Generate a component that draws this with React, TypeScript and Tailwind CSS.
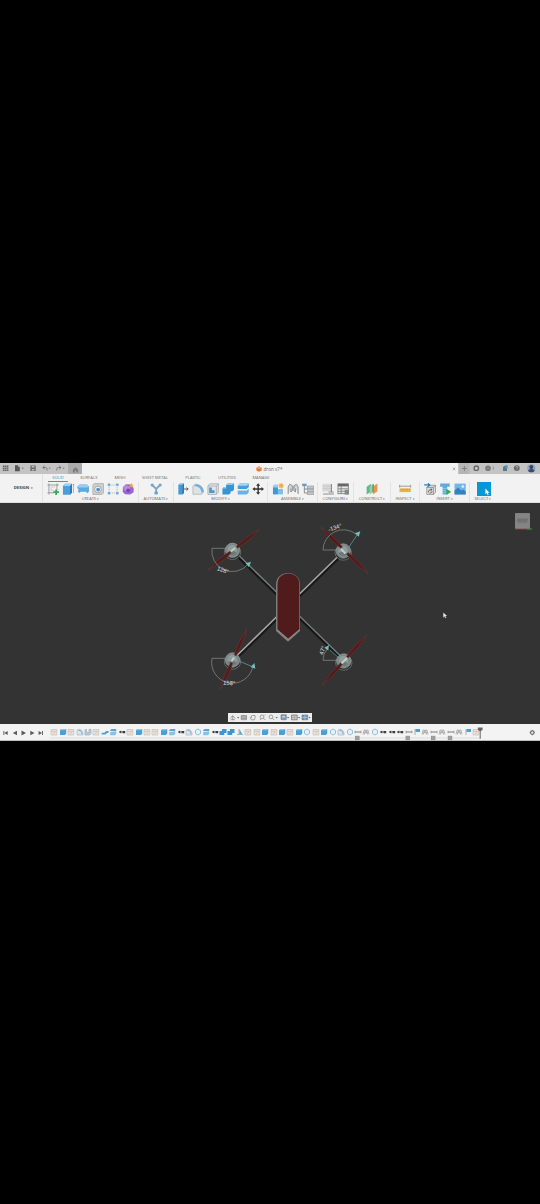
import React from "react";

type IconName =
  | "sketch" | "extrude" | "sheet" | "hole" | "pattern" | "form" | "automate"
  | "press" | "fillet" | "shell" | "combine" | "split" | "move" | "component"
  | "joint" | "structure" | "configure" | "table" | "plane" | "measure"
  | "derive" | "bolt" | "image" | "select";

const glyphs: Record<IconName, React.ReactNode> = {
  sketch: (
    <>
      <path d="M1.8 .5v11M9.8 .5v6.5M.3 2h11.4M.3 9.8h6.5" stroke="#8a8a8a" strokeWidth=".8" fill="none" />
      <path d="M4 4h4M4 7.4h3M4 4v3.4" stroke="#b5b5b5" strokeWidth=".6" fill="none" />
      <path d="M9 6.4v5.6M6.2 9.2h5.6" stroke="#2fae54" strokeWidth="1.8" />
    </>
  ),
  extrude: (
    <>
      <path d="M.8 3l2-2.2h7V9.5L8 11.7H.8z" fill="#4a9fdb" />
      <path d="M.8 3l2-2.2h7L8 3z" fill="#9fd0f0" />
      <path d="M8 3L9.8.8v8.7L8 11.7z" fill="#2a78b5" />
      <path d="M11.3 1v9M10.7 2.2l.6-1.2.6 1.2" stroke="#888" strokeWidth=".6" fill="none" />
    </>
  ),
  sheet: (
    <>
      <path d="M.2 3.5L2.5 1.5h7.3l2 2v5.3l-1.6 1.5-1.5-1.5H3.6L2 10 .8 8.6 1.5 6 .2 5.5z" fill="#5aa9e0" />
      <path d="M.2 3.5l2.3-2h7.3l2 2-1.8 1H1.5z" fill="#9acdee" />
    </>
  ),
  hole: (
    <>
      <path d="M.7 2L2 .6h9.3V10L10 11.4H.7z" fill="#d2d0cd" stroke="#a5a3a0" strokeWidth=".7" />
      <circle cx="5.8" cy="6.4" r="3.4" fill="#eeeeee" stroke="#8795a2" strokeWidth=".7" />
      <circle cx="6" cy="6.6" r="1.9" fill="#4d96cc" />
    </>
  ),
  pattern: (
    <>
      <path d="M2 2h8M2 2v8h8M10 4v6" stroke="#9a9a9a" strokeWidth=".6" strokeDasharray="1.4 .7" fill="none" />
      <path d="M.6.6H3V3H.6zM9 .6h2.4V3H9zM.6 9H3v2.4H.6zM9 9h2.4v2.4H9z" fill="#66ace0" />
    </>
  ),
  form: (
    <>
      <path d="M.8 4l3-2.8 5 .3L11.5 5v4.2L8 11.6 3 11.2.6 9z" fill="#9a63d2" />
      <path d="M1 4l3-2 4 2-.5 3.5-5 .5z" fill="#b78de0" />
      <circle cx="6" cy="7.2" r="1.8" fill="#7640b2" />
      <path d="M9.3 0l.7 1.6 1.7.5-1.5 1 .1 1.8-1.4-1.1-1.6.5.5-1.7-1-1.4H8.6z" fill="#f4a92d" />
    </>
  ),
  automate: (
    <>
      <path d="M2 2l4 4 4-4M6 6v5" stroke="#7fa5c0" strokeWidth="1.9" fill="none" />
      <circle cx="2" cy="2" r="1.6" fill="#6da9cf" />
      <circle cx="10" cy="2" r="1.6" fill="#6da9cf" />
      <path d="M4.3 11.4h3.4V8.7H4.3z" fill="#5fa6d4" />
    </>
  ),
  press: (
    <>
      <path d="M1.2 1.8L2.8.5h4v9.6l-1.5 1.5H1.2z" fill="#459ad4" />
      <path d="M1.2 1.8L2.8.5h4L5.3 1.8z" fill="#a1d0ee" />
      <path d="M5.3 1.8L6.8.5v9.6l-1.5 1.5z" fill="#2a78b5" />
      <path d="M7 6h4M9.5 4.5L11 6 9.5 7.5" stroke="#555" strokeWidth="1" fill="none" />
    </>
  ),
  fillet: (
    <>
      <path d="M.8 11.3V3l2-1.8c5 0 8.6 3 8.6 7.8l-2 2.3z" fill="#dfe1e2" stroke="#9aa2a8" strokeWidth=".6" />
      <path d="M2 3l1.8-1.8c4.5.4 7.2 3 7.6 7.2L9.5 10.2C9 5.7 7 3.5 2 3z" fill="#68b0e0" />
    </>
  ),
  shell: (
    <>
      <path d="M.8 3l2-2.2h8.4v8.4l-2 2.2H.8z" fill="#e4e5e6" stroke="#9aa0a6" strokeWidth=".7" />
      <path d="M2 4.5h2.7v2.7h2.7v2.8H2z" fill="#4999d3" />
      <path d="M.8 3h8.4v8.4M9.2 3l2-2.2" stroke="#a0a5aa" strokeWidth=".7" fill="none" />
    </>
  ),
  combine: (
    <>
      <path d="M4 2L5.5.5h6.4v6.2L10.3 8.2H8.5v1.9L7 11.6H.3V5.5L1.8 4H4z" fill="#3994d6" />
      <path d="M4 2L5.5.5h6.4L10.3 2zM.3 5.5L1.8 4H4v1.5z" fill="#91c9ef" />
    </>
  ),
  split: (
    <>
      <path d="M.6 2.8L2.6.6h9v3.6L9.6 6h-9z" fill="#479edb" />
      <path d="M.6 2.8L2.6.6h9l-2 2.2z" fill="#a6d4f1" />
      <path d="M.6 7.4h9l2-2v4L9.6 11.4h-9z" fill="#6cb2e2" />
      <path d="M.6 6.7h9.1l1.9-1.8" stroke="#e6f2fa" strokeWidth=".7" fill="none" />
    </>
  ),
  move: (
    <path d="M6 .2l2.1 2.5H6.7v2.6h2.6V3.9L11.8 6 9.3 8.1V6.7H6.7v2.6h1.4L6 11.8 3.9 9.3h1.4V6.7H2.7v1.4L.2 6l2.5-2.1v1.4h2.6V2.7H3.9z" fill="#333" />
  ),
  component: (
    <>
      <path d="M.8 3h5v8.4h-5z" fill="#3f98d7" />
      <path d="M5.8 6h5v5.4h-5z" fill="#82bde6" />
      <path d="M.8 3l1.3-1.4H6v2.9H.8z" fill="#9acdec" />
      <path d="M9 0v5.4M6.3 2.7h5.4M7.1.8l3.8 3.8M10.9.8L7.1 4.6" stroke="#f2ad35" strokeWidth="1.1" />
    </>
  ),
  joint: (
    <>
      <path d="M1 11V4L2.6 1.2l2.6 1.5v5L3.7 9V5.5M11 11V4L9.4 1.2 6.8 2.7v5L8.3 9V5.5" fill="#d4d5d6" stroke="#858a8e" strokeWidth=".9" />
      <path d="M5 8l2-5" stroke="#999" strokeWidth=".7" />
    </>
  ),
  structure: (
    <>
      <path d="M2.2 2v8H6M2.2 6H6" stroke="#777" strokeWidth=".8" fill="none" />
      <path d="M0 .7h4.5v2.4H0z" fill="#659fc6" />
      <path d="M5.2 3h6.5v2.4H5.2zM5.2 6.1h6.5v2.3H5.2zM5.2 9.2h6.5v2.3H5.2z" fill="#c5c9cc" stroke="#7c8388" strokeWidth=".5" />
    </>
  ),
  configure: (
    <>
      <path d="M.3.8h8.8v7.7H.3z" fill="#d9d9da" />
      <path d="M.3 3.2h8.8M.3 5.7h8.8" stroke="#bdbdbd" strokeWidth=".6" />
      <path d="M9.3 1v8M6.5 9h5M1 11h10.8" stroke="#8b8b8b" strokeWidth="1.1" />
    </>
  ),
  table: (
    <>
      <rect x=".8" y=".9" width="10.4" height="9.8" fill="#e8e8e8" stroke="#777" strokeWidth=".8" />
      <path d="M.8.8h10.4v2.6H.8z" fill="#686868" />
      <path d="M1 5.8h10M1 8.3h10M4 3v7.5" stroke="#777" strokeWidth=".8" />
      <path d="M7.5 6.8h4.3v4.8H7.5z" fill="#85898b" />
    </>
  ),
  plane: (
    <>
      <path d="M.5 3.8L5 .8v7.7L.5 11.6z" fill="#5eb98a" />
      <path d="M3.5 3.8L7.5.8v7.9l-4 2.9z" fill="#a5cba6" />
      <path d="M6.8 3.6L11.3.5v7.8l-4.5 3.2z" fill="#e99552" />
      <path d="M6.2 1.8l1.4-1v7.8l-1.4 1z" fill="#40a86c" />
    </>
  ),
  measure: (
    <>
      <path d="M.5 3.2h11M.5 1.8v2.8M11.5 1.8v2.8" stroke="#888" strokeWidth=".8" />
      <path d="M.3 5.5h11.4v3.6H.3z" fill="#eeb23f" />
      <path d="M2 5.5V7M4 5.5v2M6 5.5V7M8 5.5v2M10 5.5V7" stroke="#a98539" strokeWidth=".5" />
    </>
  ),
  derive: (
    <>
      <path d="M2.6 4.2l2-1.9h6.8v7L9.3 11.4H2.6z" fill="#dedede" stroke="#858585" strokeWidth=".7" />
      <path d="M2.6 4.4h6.6v7M9.2 4.4l2.2-2.1" stroke="#777" strokeWidth=".7" fill="none" />
      <path d="M0 1.9h5.5M3.8.3l1.9 1.6-1.9 1.6" stroke="#277eb9" strokeWidth="1.1" fill="none" />
      <path d="M4.2 9.4c0-2 1-2.8 3.2-2.8M6.6 5.5l1.3 1.1-1.3 1.2M7.8 8.4c0 1-.8 1.7-2.4 1.7" stroke="#444" strokeWidth=".8" fill="none" />
    </>
  ),
  bolt: (
    <>
      <path d="M1 .6h9.6v3.2H8v7.6H3.5V3.8H1z" fill="#62aadb" />
      <path d="M3.5 5.5H8M3.5 7.5H8M3.5 9.5H8" stroke="#a8d0ea" strokeWidth=".6" />
      <path d="M7.2 5.8l4.7 3.1-4.7 3.1z" fill="#27ae54" />
    </>
  ),
  image: (
    <>
      <rect x=".4" y=".6" width="11.2" height="10.8" fill="#70b6e8" />
      <circle cx="8.7" cy="3.5" r="1.3" fill="#e1f1fc" />
      <path d="M.4 10V7.5L4 4.5l3 3 2-1 2.6 2v2.9H.4z" fill="#3782be" />
    </>
  ),
  select: (
    <>
      <path d="M0 0h12v12H0z" fill="#0996d6" />
      <path d="M7.2 5.5v5l1.2-1 .8 1.8.8-.4-.8-1.7h1.5z" fill="#fff" />
    </>
  ),
};

function Tool({ name }: { name: IconName }) {
  return (
    <svg viewBox="0 0 12 12" className={name === "select" ? "h-[14px] w-[14px] shrink-0" : "h-3 w-[12.3px] shrink-0"}>
      {glyphs[name]}
    </svg>
  );
}

const groups: { label: string; width: string; icons: IconName[]; last?: boolean }[] = [
  { label: "CREATE", width: "w-24", icons: ["sketch", "extrude", "sheet", "hole", "pattern", "form"] },
  { label: "AUTOMATE", width: "w-[35px]", icons: ["automate"] },
  { label: "MODIFY", width: "w-[94px]", icons: ["press", "fillet", "shell", "combine", "split", "move"] },
  { label: "ASSEMBLE", width: "w-[50px]", icons: ["component", "joint", "structure"] },
  { label: "CONFIGURE", width: "w-9", icons: ["configure", "table"] },
  { label: "CONSTRUCT", width: "w-[37px]", icons: ["plane"] },
  { label: "INSPECT", width: "w-[29px]", icons: ["measure"] },
  { label: "INSERT", width: "w-[50px]", icons: ["derive", "bolt", "image"] },
  { label: "SELECT", width: "w-[26px]", icons: ["select"], last: true },
];

const tabs = [
  ["SOLID", "w-[30px]"],
  ["SURFACE", "w-8"],
  ["MESH", "w-[30px]"],
  ["SHEET METAL", "w-10"],
  ["PLASTIC", "w-9"],
  ["UTILITIES", "w-8"],
  ["MANAGE", "w-9"],
];

function TitleBar() {
  return (
    <div className="flex h-[11px] w-full bg-[#c3c3c3]">
      <svg viewBox="0 0 68 11" className="h-[11px] w-[68px]">
        <path d="M2.8 2.4h1.6V4H2.8zM4.8 2.4h1.6V4H4.8zM6.8 2.4h1.6V4H6.8zM2.8 4.4h1.6V6H2.8zM4.8 4.4h1.6V6H4.8zM6.8 4.4h1.6V6H6.8zM2.8 6.4h1.6V8H2.8zM4.8 6.4h1.6V8H4.8zM6.8 6.4h1.6V8H6.8z" fill="#616161" />
        <path d="M15 2.3h3l1.8 1.7v4.2H15z" fill="#555" />
        <path d="M18 2.3V4h1.8z" fill="#aaa" />
        <path d="M21.7 4.7h2.2l-1.1 1.4zM48.7 4.7h2l-1 1.3zM62.7 4.7h2l-1 1.3z" fill="#666" />
        <path d="M30.4 2.6h5.3v5.5h-5.3z" fill="#666" />
        <path d="M31.7 3h2.8v1.5h-2.8zM31.8 6h2.6v1.6h-2.6z" fill="#bbb" />
        <path d="M44.6 2.9l-1.9 1.6 1.9 1.6M43 4.5h2.3c1.6 0 2 1 1.7 3" stroke="#707070" strokeWidth=".9" fill="none" />
        <path d="M59.2 2.9l1.9 1.6-1.9 1.6M60.8 4.5h-2.3c-1.6 0-2 1-1.7 3" stroke="#707070" strokeWidth=".9" fill="none" />
      </svg>
      <div className="flex w-[14px] items-center justify-center bg-[#acacac] pt-[1px]">
        <svg viewBox="0 0 8 8" className="h-[7px] w-[7px]">
          <path d="M1 4l3-2.6L7 4v3.5H4.8V5.2H3.4v2.3H1z" fill="#7d7d7d" />
        </svg>
      </div>
      <div className="flex w-[376px] items-center justify-center gap-[2px] bg-[#f2f2f2]">
        <svg viewBox="0 0 6 6" className="ml-[1px] mt-[1px] h-[6px] w-[6px]">
          <path d="M.4 1.7L3 .3l2.7 1.4v2.8L3 5.8.4 4.5z" fill="#ee7a2d" />
          <path d="M.4 1.7L3 .3l2.7 1.4L3 3z" fill="#f9ae73" />
        </svg>
        <span className="mr-[3px] mt-[1px] whitespace-nowrap text-[4.6px] leading-none text-[#666]">dron v7*</span>
      </div>
      <svg viewBox="450 0 90 11" className="-ml-2 h-[11px] w-[90px]">
        <path d="M452.7 4.5l2.6 2.6m0-2.6l-2.6 2.6" stroke="#888" strokeWidth=".7" />
        <path d="M459 0h10.5v11H459z" fill="#b5b5b5" />
        <path d="M464.4 3v5M461.9 5.5h5" stroke="#808080" strokeWidth="1" />
        <circle cx="476.3" cy="5.2" r="2.2" stroke="#666" strokeWidth="1.4" fill="#ccc" />
        <circle cx="488" cy="5.2" r="2.8" fill="#747474" />
        <path d="M485.4 5.2h5M488 2.6v5" stroke="#999" strokeWidth=".5" />
        <path d="M493.3 3.6v3" stroke="#888" strokeWidth=".8" />
        <path d="M503 8V4.5c0-2 4-2 4 0V8z" fill="#55788b" />
        <path d="M505 2.3h2.7v3H505z" fill="#459bc0" />
        <circle cx="516.8" cy="5.1" r="2.9" fill="#666" />
        <path d="M515.8 4.2c.2-1.3 2.2-1.1 2 .1-.1.6-1 .7-1 1.4M516.8 6.7v.6" stroke="#ddd" strokeWidth=".6" fill="none" />
        <circle cx="531.3" cy="5.3" r="4.1" fill="#91a2bb" />
        <circle cx="531.3" cy="4" r="1.9" fill="#34435f" />
        <path d="M528 7.8c1-2.5 5.6-2.5 6.6 0-1.6 2-5 2-6.6 0z" fill="#344c76" />
      </svg>
    </div>
  );
}

function Ribbon() {
  return (
    <div className="flex h-[29px] w-full border-b border-[#dedede] bg-[#f2f2f2]">
      <div className="flex w-[43px] items-center justify-center border-r border-[#e2e2e2] pl-[5px] text-[4.2px] font-bold leading-none text-[#444]">
        DESIGN<span className="ml-[2px] text-[3px]">▾</span>
      </div>
      <div className="flex flex-col">
        <div className="flex h-[8px]">
          {tabs.map(([name, width], i) => (
            <div key={name} className={`${width} flex justify-center`}>
              <span className={i === 0 ? "h-[8px] w-5 border-b border-[#2b9fda] pt-[2px] text-center text-[4.1px] leading-[4px] text-[#2497d0]" : "whitespace-nowrap pt-[2px] text-[4.1px] leading-[4px] text-[#6b6b6b]"}>{name}</span>
            </div>
          ))}
        </div>
        <div className="flex h-5">
          {groups.map((g) => (
            <div key={g.label} className={`${g.width} flex flex-col items-center ${g.last ? "" : "border-r border-[#e3e3e3]"}`}>
              <div className="ml-px flex h-[14px] items-center justify-center gap-[2.7px]">
                {g.icons.map((n) => <Tool key={n} name={n} />)}
              </div>
              <div className="whitespace-nowrap pt-[1px] text-[4.1px] leading-[4px] text-[#666]">
                {g.label}<span className="ml-[1px] text-[3px]">▾</span>
              </div>
            </div>
          ))}
        </div>
      </div>
    </div>
  );
}

function Hub({ x, y }: { x: number; y: number }) {
  return (
    <g transform={`translate(${x} ${y})`}>
      <ellipse cx="0" cy="1.8" rx="8.2" ry="7.4" fill="#2a2c2c" stroke="#707777" strokeWidth=".8" />
      <circle r="7.2" fill="#7c8786" stroke="#98a1a1" strokeWidth=".6" />
      <circle cx="-.3" cy="-.4" r="4.8" fill="#8f9d9b" />
      <path d="M-5 2a5.5 5.5 0 0 0 9 1L1 0z" fill="#6c7877" />
    </g>
  );
}

function Propeller({ x1, y1, x2, y2 }: { x1: number; y1: number; x2: number; y2: number }) {
  const length = Math.hypot(x2 - x1, y2 - y1) / 2;
  const angle = (Math.atan2(y2 - y1, x2 - x1) * 180) / Math.PI;
  const tip = length;
  return (
    <g transform={`translate(${(x1 + x2) / 2} ${(y1 + y2) / 2}) rotate(${angle})`} fill="#541b1b" stroke="#6f3f3c" strokeWidth=".45">
      <path d={`M4 -1Q${tip * 0.5} -3.2 ${tip} -.3Q${tip * 0.6} 2.6 4 1.2z`} />
      <path d={`M-4 1Q${-tip * 0.5} 3.2 ${-tip} .3Q${-tip * 0.6} -2.6 -4 -1.2z`} />
    </g>
  );
}

function Viewport() {
  return (
    <svg viewBox="0 503 540 221" className="block h-[221px] w-[540px] bg-[#333333]" fontFamily="Liberation Sans, sans-serif">
      <g fill="none">
        <path d="M238 556l41 40M299 617l41 40" stroke="#7d8080" strokeWidth="3.2" />
        <path d="M237.3 556.4l41 40M298.3 617.4l41 40" stroke="#151717" strokeWidth="2.2" />
        <path d="M238 656l41-40M299 596l41-40" stroke="#171818" strokeWidth="3.6" />
        <path d="M237.2 655.2l41-40M298.2 595.2l41-40" stroke="#a9a9a7" strokeWidth="1.6" />
      </g>
      <path d="M276 584.5c0-15.5 24-15.5 24 0v46.5l-12 10.7-12-10.7z" fill="#7d7d7d" />
      <path d="M277.5 584c0-14 21.8-14 21.8 0v45.5l-11 9.2-10.8-9.2z" fill="#4f1c1b" />
      <path d="M277 630l11 9.6 11.5-9.8" fill="none" stroke="#8b8b8b" strokeWidth="1.1" />
      <Hub x={232.5} y={550.3} />
      <Hub x={343.3} y={551} />
      <Hub x={232.5} y={660} />
      <Hub x={343.8} y={661} />
      <Propeller x1={207.5} y1={570} x2={260} y2={529.5} />
      <Propeller x1={321} y1={527} x2={368} y2={574} />
      <Propeller x1={220} y1={689} x2={247} y2={629} />
      <Propeller x1={322} y1={685} x2={367} y2={635.5} />
      <path d="M231 551.5l4-3.5M341 549l4.5 4.5M231.5 661.5l2.5-4M341.5 663.5l5.5-5.5" stroke="#b6d2cf" strokeWidth="2" />
      <g fill="none" stroke="#858888" strokeWidth=".75">
        <path d="M228 548.3h-16a20.5 20.5 0 0 0 36 16" />
        <path d="M340 550h-17a20.5 20.5 0 0 1 33-16" />
        <path d="M230 658.3h-18a20.5 20.5 0 0 0 41 8" />
        <path d="M340 660.3h-17q0-7 4-11" />
      </g>
      <path d="M349 547l8-12M239 661l13 5.5M330 650l10 9" fill="none" stroke="#5c9995" strokeWidth=".8" />
      <g fill="#73bdbb">
        <path d="M245.5 563.2l5.5-1.5-2 5.5z" />
        <path d="M354.7 533.3l5.6-2-1.5 5.5z" />
        <path d="M250.5 667l4-4 .8 5.8z" />
        <path d="M324.3 647.8l4.7-2.8-.8 5.6z" />
      </g>
      <g fontSize="5.8" fill="#e1e1e1" textAnchor="middle">
        <text transform="translate(222.4 572) rotate(19)">128°</text>
        <text transform="translate(335.5 529.5) rotate(-18)">-134°</text>
        <text transform="translate(229 685) rotate(3)">158°</text>
        <text transform="translate(324.3 651) rotate(-73)">47°</text>
      </g>
      <path d="M515.5 513.5h14v15h-14z" fill="#858585" stroke="#929292" strokeWidth=".7" />
      <path d="M517.5 518h10v5.5h-10z" fill="#7a7a7a" />
      <text x="522.5" y="522" textAnchor="middle" fontSize="3.3" fill="#606060">FRONT</text>
      <path d="M515 529h14" stroke="#8a4f4a" strokeWidth=".8" />
      <path d="M527 529h5" stroke="#369d43" strokeWidth="1" />
      <path d="M443.2 612.5v5.2l1.3-1.2.8 1.7 1-.5-.8-1.6h1.7z" fill="#eee" stroke="#555" strokeWidth=".3" />
    </svg>
  );
}

function NavBar() {
  return (
    <svg viewBox="228 713 84 9" className="absolute left-[228px] top-[210px] h-[9px] w-[84px] bg-[#ededed]">
      <g fill="none" stroke="#8d8d8d" strokeWidth=".8">
        <path d="M230.3 718.5l2.4-3 2.4 3M232.7 716v4M230.5 719.7h4.4" />
        <path d="M241.2 715.5h5.3v4.2h-5.3zM241.2 716.9h5.3M241.2 718.3h5.3" fill="#c4c4c4" />
        <path d="M251.2 719.8l-.9-2.5 1.2.2v-1.8l1-.4 2.6.3v2.2l-.8 2z" />
        <circle cx="262" cy="716.9" r="1.9" /><path d="M263.4 718.2l1.9 1.9M260 720l1-1M264.2 715.6l1-1" />
        <circle cx="271" cy="716.9" r="1.9" /><path d="M272.4 718.2l1.9 1.9" />
      </g>
      <path d="M281 714.8h5.3v4.7H281z" fill="#7f9db6" stroke="#6b7680" strokeWidth=".6" />
      <path d="M282.3 716h2.8v1.6h-2.8zM282 720h3.4v.8H282z" fill="#c3d5e2" />
      <path d="M291.5 715h5.7v4.8h-5.7z" fill="#ccc" stroke="#777" strokeWidth=".8" />
      <path d="M291.5 717.4h5.7M294.3 715v4.8" stroke="#999" strokeWidth=".6" />
      <path d="M302 715h5.7v4.8H302z" fill="#6d97bd" stroke="#567" strokeWidth=".5" />
      <path d="M302 717.4h5.7M304.9 715v4.8" stroke="#c8dae8" strokeWidth=".5" />
      <path d="M237 717h2.3l-1.1 1.4zM275.5 717h2.3l-1.1 1.4zM287 717h2.2l-1.1 1.4zM298 717h2.2l-1.1 1.4zM308.4 717h2.2l-1.1 1.4z" fill="#666" />
    </svg>
  );
}

const featureGlyphs: Record<string, React.ReactNode> = {
  s: <><path d="M1 1.5h5.8V7H1z" fill="#e9e4df" stroke="#c5beb7" strokeWidth=".7" /><path d="M1.2 3.3h4M3 6l3.7-3.5" stroke="#cfb9a6" strokeWidth=".7" /></>,
  e: <><path d="M1 2.3L2.4.9h4.8v4.8L5.8 7.1H1z" fill="#4a9fd7" /><path d="M1 2.3L2.4.9h4.8L5.8 2.3z" fill="#8fc5e8" /></>,
  f: <><path d="M1 7V2c3.5-2 6.5 1 6 5z" fill="#dce5eb" stroke="#9aaebb" strokeWidth=".6" /><path d="M2.5 2.3C5 2 6 4 6 6" stroke="#6bb0dc" fill="none" /></>,
  h: <path d="M1 1.5h1.5v3H5V1.3h2v4.2L5.5 7H1z" fill="#b7cddc" stroke="#91a5b2" strokeWidth=".6" />,
  w: <path d="M.7 4.8h2.6l2-1.8h2.2v1.7L6 5l-1.6 1.4H.7z" fill="#4a9fd5" />,
  p: <><path d="M1 2.5L2.5 1h4.7v2H1z" fill="#52a6db" /><path d="M1.2 4l6-.8V6L5.7 7.2H1.2z" fill="#8dc0e0" /></>,
  j: <><path d="M1.5 4h5.5" stroke="#555" strokeWidth=".9" /><path d="M3.2 2.4v3.2L.9 4zM4.6 2.9h2.6v2.3H4.6z" fill="#3c3c3c" /></>,
  r: <path d="M4 1l2.5 1.4v3.2L4 7 1.5 5.6V2.4z" fill="#e9eff3" stroke="#85bbdf" strokeWidth=".9" />,
  c: <path d="M3 1h4.5v4H5.2v2H.5V3H3z" fill="#3a96d4" />,
  m: <><path d="M3.5 1L6 6H3.5z" fill="#4ba0d6" /><path d="M1 6.5h6M3 1v5" stroke="#8297a5" strokeWidth=".7" /></>,
  g: <><path d="M1 4h6" stroke="#a5a5a5" strokeWidth="1.5" /><path d="M1 2.7v2.6M7 2.7v2.6" stroke="#8a8a8a" strokeWidth=".7" /></>,
  a: <path d="M1 6.5L2 2h1.5v3h1V2H6l1 4.5M2.5 3.5v3M5.5 3.5v3" fill="none" stroke="#a5a5a5" strokeWidth=".8" />,
  l: <><path d="M2 1v6" stroke="#999" strokeWidth=".8" /><path d="M2.5 1H7v3H2.5z" fill="#4d9fd2" /></>,
};

const history = ["s", "e", "s", "f", "h", "s", "w", "p", "j", "s", "e", "s", "s", "e", "p", "j", "f", "r", "p", "j", "c", "c", "m", "s", "s", "e", "s", "e", "s", "e", "r", "s", "e", "r", "f", "r", "g", "a", "r", "j", "j", "j", "g", "l", "a", "g", "a", "g", "a", "l", "s"];

function Timeline() {
  return (
    <div className="relative flex h-[17px] w-full items-start bg-[#f3f3f3] pt-[4px]">
      <svg viewBox="0 0 50 8" className="mt-[.5px] h-2 w-[50px] shrink-0" fill="#5b5b5b">
        <path d="M3.4 2h.9v4h-.9zM7.7 2v4L4.3 4zM17 1.8v4.4L12.8 4zM21.5 1.4v5.2L26 4zM30.3 1.8v4.4L34.5 4zM38.6 2v4L42 4zM42 2h.9v4H42z" />
      </svg>
      {history.map((kind, i) => (
        <div key={i} className="flex w-[8.44px] shrink-0 justify-center">
          <svg viewBox="0 0 8 8" className="h-2 w-2">{featureGlyphs[kind]}</svg>
        </div>
      ))}
      <svg viewBox="0 0 540 17" className="absolute inset-0 h-[17px] w-[540px]">
        <path d="M50 14h430" stroke="#d5d5d5" strokeWidth=".8" />
        <path d="M0 16.5h540" stroke="#bcbcbc" strokeWidth="1" />
        {[357.3, 407.8, 433.2, 450].map((x) => (
          <g key={x}>
            <rect x={x - 1.8} y="12.2" width="3.6" height="3.6" fill="#b0b0b0" stroke="#868686" strokeWidth=".7" />
            <path d={`M${x - 1} 14h2M${x} 13v2`} stroke="#888" strokeWidth=".5" />
          </g>
        ))}
        <path d="M477.8 3.5h4.8v2.2L480.7 7.2v7.6h-1V7.2l-1.9-1.5z" fill="#666" />
        <circle cx="532.3" cy="8.6" r="1.8" fill="#eee" stroke="#6b6b6b" strokeWidth="1.2" />
        <path d="M532.3 5.8v1M532.3 10.4v1M529.6 8.6h1M534 8.6h1" stroke="#777" strokeWidth=".8" />
      </svg>
    </div>
  );
}

export default function App() {
  return (
    <main className="h-[1204px] w-[540px] overflow-hidden bg-black pt-[463px] font-['Open_Sans','Liberation_Sans',sans-serif]">
      <TitleBar />
      <Ribbon />
      <div className="relative h-[221px]">
        <Viewport />
        <NavBar />
      </div>
      <Timeline />
    </main>
  );
}
